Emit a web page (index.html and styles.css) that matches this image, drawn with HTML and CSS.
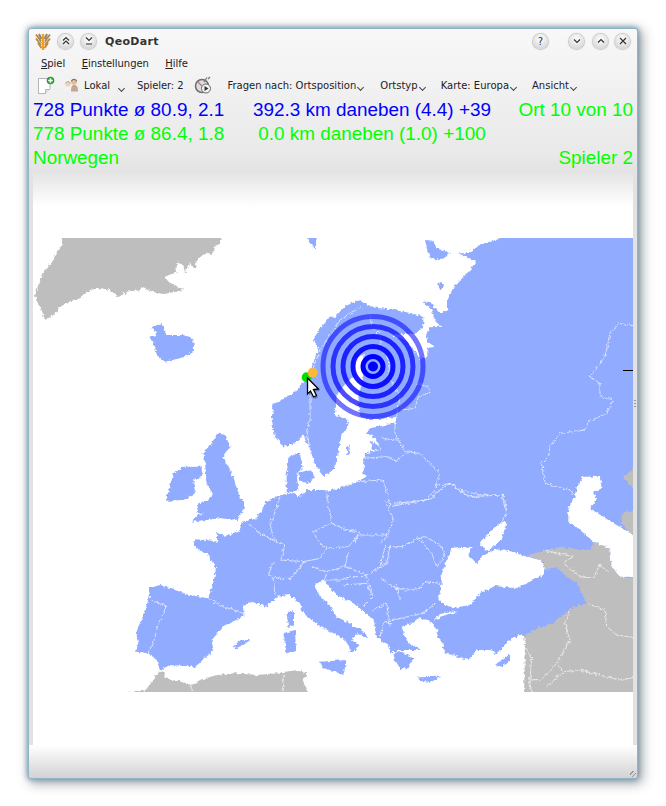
FILE: index.html
```html
<!DOCTYPE html>
<html lang="de">
<head>
    <meta charset="UTF-8">
    <title>QeoDart</title>
    <link rel="stylesheet" href="styles.css">
</head>
<body>
<div class="window">
    <div class="top">
        <!-- Titelleiste -->
        <div class="titlebar">
            <svg class="logo" width="16" height="17" viewBox="0 0 16 17">
                <path d="M1 1.500 L6 8 M1 5.500 L6 12 M3 10 L6.500 15" stroke="#c08a3e" stroke-width="2" fill="none"/>
                <path d="M15 1.500 L10 8 M15 5.500 L10 12 M13 10 L9.500 15" stroke="#c08a3e" stroke-width="2" fill="none"/>
                <path d="M4 1 L6.500 6 M12 1 L9.500 6" stroke="#8f8172" stroke-width="2" fill="none"/>
                <path d="M2.500 3.500 L6.500 10 M13.500 3.500 L9.500 10" stroke="#94877a" stroke-width="1" fill="none"/>
                <path d="M8 1 V17" stroke="#f0a21f" stroke-width="2.400"/>
            </svg>
            <span class="win-btn first"><svg width="10" height="10" viewBox="0 0 10 10"><path d="M2 4.500 L5 1.500 L8 4.500 M2 8 L5 5 L8 8"/></svg></span>
            <span class="win-btn"><svg width="10" height="10" viewBox="0 0 10 10"><path d="M2 1.500 L5 4.500 L8 1.500 M2 8 H8"/></svg></span>
            <span class="title">QeoDart</span>
            <span class="win-btn help">?</span>
            <span class="win-btn min"><svg width="10" height="10" viewBox="0 0 10 10"><path d="M2 3.500 L5 6.500 L8 3.500"/></svg></span>
            <span class="win-btn"><svg width="10" height="10" viewBox="0 0 10 10"><path d="M2 6.500 L5 3.500 L8 6.500"/></svg></span>
            <span class="win-btn"><svg width="10" height="10" viewBox="0 0 10 10"><path d="M2 2 L8 8 M8 2 L2 8"/></svg></span>
        </div>

        <!-- Menue -->
        <div class="menubar">
            <span><u>S</u>piel</span>
            <span><u>E</u>instellungen</span>
            <span><u>H</u>ilfe</span>
        </div>

        <!-- Werkzeugleiste -->
        <div class="toolbar">
            <svg class="tool-new" width="18" height="19" viewBox="0 0 18 19">
                <path d="M1.500 2.500 H13 V13 L8.500 17.500 H1.500 Z" fill="#fff" stroke="#b4b4b4"/>
                <path d="M8.500 17.500 V13.500 H13" fill="#e6e6e6" stroke="#b4b4b4"/>
                <circle cx="13.500" cy="4.500" r="3.800" fill="#23a02f"/>
                <path d="M13.500 2.200 V6.800 M11.200 4.500 H15.800" stroke="#fff" stroke-width="1.600"/>
            </svg>
            <svg class="tool-people" width="17" height="17" viewBox="0 0 17 17">
                <ellipse cx="7" cy="15" rx="6.500" ry="1.800" fill="#eeeef2"/>
                <circle cx="5" cy="7" r="2.600" fill="#f3d3b8"/>
                <path d="M1 15 C1 11 3 10 5 10 C7.500 10 9 11 9 15 Z" fill="#f6f1ea"/>
                <circle cx="11" cy="5" r="2.800" fill="#e6bb9a"/>
                <path d="M8 14.500 C8 9 9.500 8 11 8 C13.500 8 15 9 15 14.500 Z" fill="#c2a890"/>
                <path d="M8.500 4.500 C9 1.500 13 1.500 13.500 4.500" stroke="#8a6c58" stroke-width="1.200" fill="none"/>
                <path d="M2.800 6.500 C3.200 4 6.800 4 7.200 6.500" stroke="#b59a80" fill="none"/>
            </svg>
            <span class="tool-label lokal">Lokal</span>
            <span class="chev low"></span>
            <span class="tool-label spieler">Spieler: 2</span>
            <svg class="tool-replay" width="18" height="18" viewBox="0 0 18 18">
                <circle cx="8" cy="10" r="6.500" fill="#dcdcdc" stroke="#6e6e6e" stroke-width="1.500"/>
                <path d="M4 6 L8 10" stroke="#b08080" stroke-width="1.200"/>
                <path d="M13 1.500 L10 6 M14 3 L16 1" stroke="#777" stroke-width="1.200"/>
                <circle cx="12" cy="12.500" r="4.500" fill="#f4f4f4" stroke="#666"/>
                <path d="M10.500 10 L14.500 12.500 L10.500 15 Z" fill="#333"/>
            </svg>
            <span class="tool-label fragen">Fragen nach: Ortsposition</span><span class="chev"></span>
            <span class="tool-label ortstyp">Ortstyp</span><span class="chev"></span>
            <span class="tool-label karte">Karte: Europa</span><span class="chev"></span>
            <span class="tool-label ansicht">Ansicht</span><span class="chev"></span>
        </div>

        <!-- Spielstand -->
        <div class="scores">
            <span class="blue">728 Punkte ø 80.9, 2.1</span>
            <span class="blue mid">392.3 km daneben (4.4) +39</span>
            <span class="green right">Ort 10 von 10</span>
            <span class="green">778 Punkte ø 86.4, 1.8</span>
            <span class="green mid">0.0 km daneben (1.0) +100</span>
            <span></span>
            <span class="green">Norwegen</span>
            <span></span>
            <span class="green right">Spieler 2</span>
        </div>
    </div>

    <div class="map-area">
        <svg class="map" width="600" height="454" viewBox="33 238 600 454">
            <defs>
                <!-- macht die Kuesten und Grenzen etwas unruhig -->
                <filter id="rough" filterUnits="userSpaceOnUse" x="33" y="238" width="600" height="454">
                    <feTurbulence type="fractalNoise" baseFrequency=".32" numOctaves="2" seed="4"/>
                    <feDisplacementMap in="SourceGraphic" scale="4.500" xChannelSelector="R" yChannelSelector="G"/>
                </filter>
            </defs>
            <g filter="url(#rough)">
            <!-- Koordinaten der Gruppen: 3x Pixel ab dem jeweiligen Versatz -->
            <g transform="translate(340 220) scale(.33333)">
                <polygon class="land" points="900,40 475,40 475,58 420,75 385,100 355,100 408,125 400,140 370,170 345,195 320,240 325,270 300,280 290,270 270,245 250,245 275,270 285,300 305,320 270,322 258,345 262,365 285,380 262,385 262,412 240,418 222,390 195,358 150,345 230,340 250,320 250,290 215,280 150,268 95,262 60,240 20,255 -15,290 -30,290 -55,320 -80,355 -65,385 -85,440 -102,470 -125,510 -160,530 -200,555 -205,600 -195,650 -170,682 -130,665 -110,645 -90,690 -75,730 -50,768 -15,748 -5,690 5,645 20,625 25,600 -15,585 -10,525 25,480 45,470 45,415 70,405 70,470 55,530 60,590 100,600 170,590 165,610 90,625 80,640 105,655 125,690 100,695 75,700 70,760 80,770 40,790 -30,812 -50,810 -100,810 -120,830 -140,820 -180,825 -225,845 -230,865 -250,895 -295,905 -300,930 -345,950 -370,935 -368,965 -400,960 -438,958 -435,980 -395,1005 -372,1045 -380,1090 -395,1135 -450,1125 -540,1095 -575,1105 -570,1125 -585,1170 -612,1240 -605,1270 -612,1295 -575,1300 -550,1320 -540,1350 -510,1335 -435,1340 -405,1315 -380,1290 -385,1260 -345,1215 -290,1190 -290,1155 -265,1145 -220,1160 -190,1130 -150,1125 -120,1150 -110,1180 -65,1215 -20,1240 15,1260 28,1280 30,1300 50,1290 55,1275 35,1260 50,1240 85,1255 70,1235 20,1205 -10,1190 -35,1150 -60,1130 -75,1095 -50,1078 -30,1105 -10,1125 50,1155 70,1175 100,1195 110,1250 150,1280 150,1300 185,1290 245,1290 205,1270 195,1250 185,1220 215,1210 235,1195 265,1200 295,1230 290,1250 310,1270 315,1300 355,1310 385,1320 410,1290 450,1290 470,1300 510,1260 540,1245 560,1250 900,1300"/>
                <polygon class="land" points="255,60 280,62 290,85 330,100 305,120 270,115 262,90"/>
                <polygon class="land" points="292,190 305,186 312,198 302,210 294,204"/>
                <polygon class="land" points="520,92 525,75 545,62 558,70 540,88"/>
                <polygon class="land" points="20,680 28,676 30,700 22,708"/>
                <polygon class="land" points="90,660 120,680 122,692 100,690"/>
                <polyline class="border" points="900,320 835,310 810,340 795,410 750,470 780,490 780,530 820,540 800,580 745,605 735,630 660,640 630,680 625,710 605,730 615,790 690,810 700,825"/>
                <polyline class="border" points="90,285 95,320 120,345 125,380 150,430 145,470 180,530 170,590"/>
                <polyline class="border" points="165,610 165,640 195,695 240,700 300,760 285,800 330,790 385,830 490,825 500,870"/>
                <polyline class="border" points="75,715 140,710 170,725 195,700"/>
                <polyline class="border" points="125,655 170,660"/>
                <polyline class="border" points="50,785 130,780 145,830 150,860 260,840 285,810"/>
                <polyline class="border" points="60,260 0,300 -60,390 -90,470 -90,600 -100,630 -90,690"/>
                <polyline class="border" points="230,490 265,500 270,518 235,530 225,565 180,570"/>
                <polygon class="other" points="850,775 900,725 900,825"/>
            </g>

            <g transform="translate(20 220) scale(.33333)">
                <polygon class="other" points="130,40 605,40 600,75 585,80 575,105 555,100 530,120 525,150 510,125 495,160 490,135 470,125 470,155 435,170 445,185 490,210 470,215 430,222 395,215 365,200 360,210 320,215 295,230 270,210 240,205 210,210 180,235 150,245 120,260 100,285 75,300 65,270 50,245 45,225 55,195 70,160 100,120 125,75"/>
                <polygon class="land" points="395,320 425,312 440,345 490,345 520,355 522,395 480,415 435,425 410,405 405,380 388,350 410,345"/>
                <polygon class="land" points="862,50 890,50 888,85 875,75"/>
                <polygon class="land" points="490,740 545,740 547,770 520,780 525,820 490,840 437,842 450,800 460,760"/>
                <polygon class="land" points="590,640 615,645 632,680 610,710 640,770 660,835 675,850 668,880 530,880 535,850 590,845 575,815 560,790 555,730 550,695 575,670"/>
                <polygon class="land" points="800,770 805,710 840,700 848,745 830,760 835,810 800,820"/>
                <polygon class="land" points="835,760 870,748 885,770 860,792 838,785"/>
            </g>

            <g transform="translate(110 480) scale(.33333)">
                <polygon class="land" points="325,0 370,0 380,55 405,65 395,90 385,120 330,115 245,125 265,105 300,90 265,70 295,60 310,40 295,0"/>
                <polygon class="land" points="630,545 710,540 700,585 680,575 640,565"/>
                <polygon class="land" points="530,400 552,390 552,435 535,445"/>
                <polygon class="land" points="520,460 555,450 558,510 530,520"/>
                <polygon class="land" points="368,500 392,480 420,480 400,495 378,505"/>
                <polygon class="other" points="55,650 55,636 100,632 125,610 145,575 160,575 165,595 215,605 245,615 270,600 320,585 375,580 440,585 500,580 560,570 592,580 578,600 595,636 595,650"/>
                <polyline class="border" points="415,130 450,160 490,180 525,195 512,240"/>
                <polyline class="border" points="510,50 490,110 480,130 490,175"/>
                <polyline class="border" points="650,40 660,100 665,130"/>
                <polyline class="border" points="610,155 665,130 710,150 745,155 735,190"/>
                <polyline class="border" points="610,155 625,185 650,205 715,200 745,165 830,165"/>
                <polyline class="border" points="512,240 580,245 630,235 650,205"/>
                <polyline class="border" points="605,260 650,275 705,260 715,220"/>
                <polyline class="border" points="490,245 475,285 500,295 540,295 570,265 580,245"/>
                <polyline class="border" points="490,295 495,345"/>
                <polyline class="border" points="295,355 340,380 400,400"/>
                <polyline class="border" points="125,362 170,378 145,430 130,490 115,520"/>
                <polyline class="border" points="650,280 645,300 690,300 720,290 770,290 790,350 760,380"/>
                <polyline class="border" points="700,315 770,310 785,345"/>
                <polyline class="border" points="705,260 770,285 830,250 840,200"/>
                <polyline class="border" points="790,390 830,370 840,440"/>
                <polyline class="border" points="240,615 250,636"/>
                <polyline class="border" points="520,585 520,636"/>
            </g>

            <g transform="translate(380 480) scale(.33333)">
                <polygon class="other" points="440,228 495,210 545,200 600,210 635,210 640,185 690,205 695,260 720,290 780,295 780,650 432,650 435,490 432,465 470,445 515,430 560,395 580,380 620,370 610,350 590,310 560,290 530,262 495,268 495,250 480,240"/>
                <polygon class="other" points="730,-10 780,-10 780,40"/>
                <polygon class="other" points="780,95 735,95 722,118 750,175 780,180"/>
                <polygon class="sea" points="610,-10 660,-10 665,25 640,40 650,60 630,85 700,130 780,175 780,290 720,290 695,260 690,205 640,185 600,150 565,125 565,85 585,50 590,20"/>
                <polygon class="sea" points="215,205 240,200 275,205 265,225 290,250 305,230 345,208 400,215 440,230 480,240 495,260 490,285 440,310 410,325 345,318 300,340 270,375 215,385 175,360 185,310 185,280 200,240"/>
                <polygon class="sea" points="300,190 350,135 380,125 365,180 320,215"/>
                <polygon class="sea" points="160,425 195,405 235,395 205,395 175,405"/>
                <polygon class="land" points="40,520 65,515 100,535 85,565 60,565 45,540"/>
                <polygon class="land" points="345,555 390,520 390,540 365,560"/>
                <polygon class="land" points="115,592 185,590 150,605 118,603"/>
                <polyline class="border" points="40,70 100,65 160,55 165,40 210,10 240,30 300,45 365,45 380,100 360,130"/>
                <polyline class="border" points="15,60 40,120 20,170 0,190"/>
                <polyline class="border" points="110,175 135,170 185,200 195,225 170,260 155,220 130,190 110,175"/>
                <polyline class="border" points="0,295 50,325 80,330 120,325 135,305 180,310"/>
                <polyline class="border" points="15,200 70,200 110,175"/>
                <polyline class="border" points="15,200 0,260"/>
                <polyline class="border" points="45,310 60,360"/>
                <polyline class="border" points="10,430 60,415 130,400 165,370"/>
                <polyline class="border" points="10,430 0,470"/>
                <polyline class="border" points="430,490 455,535 450,600 485,598 530,550 570,480 555,430 570,390"/>
                <polyline class="border" points="530,550 550,575 600,570 720,600 780,590"/>
                <polyline class="border" points="500,620 550,575"/>
                <polyline class="border" points="445,590 458,650"/>
                <polyline class="border" points="620,370 675,390 680,440 710,465 780,475"/>
                <polyline class="border" points="490,210 580,230 550,250 600,290 640,295 660,255 690,280"/>
            </g>
            </g>

            <line class="tick" x1="623" y1="370.500" x2="633" y2="370.500"/>

            <!-- Zielscheibe -->
            <g>
                <circle class="ring r5" cx="373" cy="366.500" r="50"/>
                <circle class="ring r4" cx="373" cy="366.500" r="40"/>
                <circle class="ring r3" cx="373" cy="366.500" r="30"/>
                <circle class="ring r2" cx="373" cy="366.500" r="20"/>
                <circle class="ring" cx="373" cy="366.500" r="10"/>
                <circle class="dot" cx="373" cy="366.500" r="5"/>
            </g>
            <circle class="mark-green" cx="306.700" cy="377.300" r="5"/>
            <circle class="mark-orange" cx="312.700" cy="372.700" r="5"/>
            <polygon class="cursor-shadow" points="309,380 320,391 315,391.500 318,397.500 315,399 312,393 309,396"/>
            <polygon class="cursor" points="307.500,378 318.500,389 313.500,389.500 316.500,395.500 313.500,397 310.500,391 307.500,394"/>
        </svg>
        <span class="handle"></span>
    </div>

    <div class="bottom">
        <span class="grip"></span>
    </div>
</div>
</body>
</html>
```
FILE: styles.css
```css
html, body {
    margin: 0;
    padding: 0;
    background: #fff;
}
body {
    width: 666px;
    height: 806px;
    overflow: hidden;
    font-family: "DejaVu Sans", sans-serif;
}
.window {
    position: relative;
    margin: 29px 0 0 29px;
    width: 608px;
    height: 749px;
    display: flex;
    flex-direction: column;
    background: #fff;
    border-radius: 3px;
    box-shadow: 0 0 0 1px #8db4c8, 0 0 5px 2px rgba(90, 130, 155, .7), 3px 3px 12px 3px rgba(70, 80, 90, .45);
}
.top {
    height: 166px;
    background:
        linear-gradient(#e3e3e3, #e2e2e2) left bottom / 4px 24px no-repeat,
        linear-gradient(#e3e3e3, #e2e2e2) right bottom / 4px 24px no-repeat,
        linear-gradient(#f8f8f8 0, #e9e9e9 125px, #e3e3e3 142px, #f6f6f6 166px);
    border-radius: 3px 3px 0 0;
}

/* Titelleiste */
.titlebar {
    height: 24px;
    display: flex;
    align-items: center;
    padding-left: 6px;
}
.logo {
    margin-right: 7px;
}
.win-btn {
    width: 15px;
    height: 15px;
    border-radius: 50%;
    background: radial-gradient(circle at 50% 35%, #f6f6f6 20%, #cfcfcf 90%);
    box-shadow: 0 0 1px 1px rgba(150, 150, 150, .5);
    display: flex;
    align-items: center;
    justify-content: center;
    margin-right: 7px;
    font-size: 10px;
    color: #333;
}
.win-btn svg path {
    fill: none;
    stroke: #333;
    stroke-width: 1.200;
}
.win-btn.first {
    margin-right: 8px;
}
.title {
    font-size: 11px;
    font-weight: bold;
    letter-spacing: .3px;
    color: #333;
    margin-left: 2px;
    flex: 1;
}
.win-btn.help {
    margin-right: 21px;
}
.win-btn.min {
    margin-right: 9px;
}

/* Menue */
.menubar {
    height: 20px;
    display: flex;
    align-items: center;
    gap: 16.500px;
    padding-left: 12px;
    font-size: 10px;
    letter-spacing: -.05px;
    color: #222;
}

/* Werkzeugleiste */
.toolbar {
    height: 24px;
    display: flex;
    align-items: center;
    font-size: 10px;
    color: #222;
}
.tool-new {
    margin-left: 8px;
}
.tool-people {
    margin-left: 8px;
}
.tool-label {
    white-space: nowrap;
}
.lokal {
    margin-left: 4px;
}
.spieler {
    margin-left: 13px;
    letter-spacing: -.1px;
}
.tool-replay {
    margin-left: 11px;
}
.fragen {
    margin-left: 15px;
}
.ortstyp {
    margin-left: 16px;
}
.karte, .ansicht {
    margin-left: 15px;
}
.chev {
    width: 4px;
    height: 4px;
    margin: 4px 1px 0 2px;
    border-right: 1.500px solid #444;
    border-bottom: 1.500px solid #444;
    transform: rotate(45deg);
}
.chev.low {
    margin: 7px 0 0 9px;
}

/* Spielstand */
.scores {
    display: grid;
    grid-template-columns: 200px 278px 122px;
    grid-auto-rows: 24px;
    padding: 1px 0 0 4px;
    font-family: "Liberation Sans", Arial, sans-serif;
    font-size: 18.900px;
    line-height: 24px;
    white-space: nowrap;
}
.blue {
    color: #0000ff;
}
.green {
    color: #00ff00;
}
.mid {
    text-align: center;
}
.right {
    text-align: right;
}

/* Karte */
.map-area {
    flex: 1;
    position: relative;
    border-left: 4px solid #e2e2e2;
    border-right: 4px solid #e2e2e2;
    padding-top: 43px;
    background: linear-gradient(#f6f6f6, #fff 12px);
}
.map {
    display: block;
}
.land {
    fill: #91abff;
}
.other {
    fill: #bebebe;
}
.sea {
    fill: #fff;
}
.border {
    fill: none;
    stroke: #fff;
    stroke-width: 2.400;
    stroke-opacity: .85;
}
.tick {
    stroke: #000;
    stroke-width: 1;
}
.ring {
    fill: none;
    stroke: #0000ff;
    stroke-width: 5;
}
.r2 { opacity: .9; }
.r3 { opacity: .8; }
.r4 { opacity: .7; }
.r5 { opacity: .55; }
.dot {
    fill: #0000ff;
}
.mark-green {
    fill: #00e000;
}
.mark-orange {
    fill: #f7b944;
}
.cursor {
    fill: #fff;
    stroke: #000;
    stroke-width: 1.300;
}
.cursor-shadow {
    fill: rgba(0, 0, 0, .3);
}
.handle {
    position: absolute;
    right: -3px;
    top: 205px;
    width: 2px;
    height: 8px;
    background: repeating-linear-gradient(#999 0 1px, transparent 1px 3px);
}

/* Unterer Rand */
.bottom {
    position: relative;
    height: 33px;
    background: linear-gradient(#fff, #f2f2f2 30%, #d2d2d2);
    border-radius: 0 0 3px 3px;
}
.grip {
    position: absolute;
    right: 1px;
    bottom: 1px;
    width: 6px;
    height: 6px;
    background: repeating-linear-gradient(135deg, transparent 0 2px, #999 2px 3px);
}
```
